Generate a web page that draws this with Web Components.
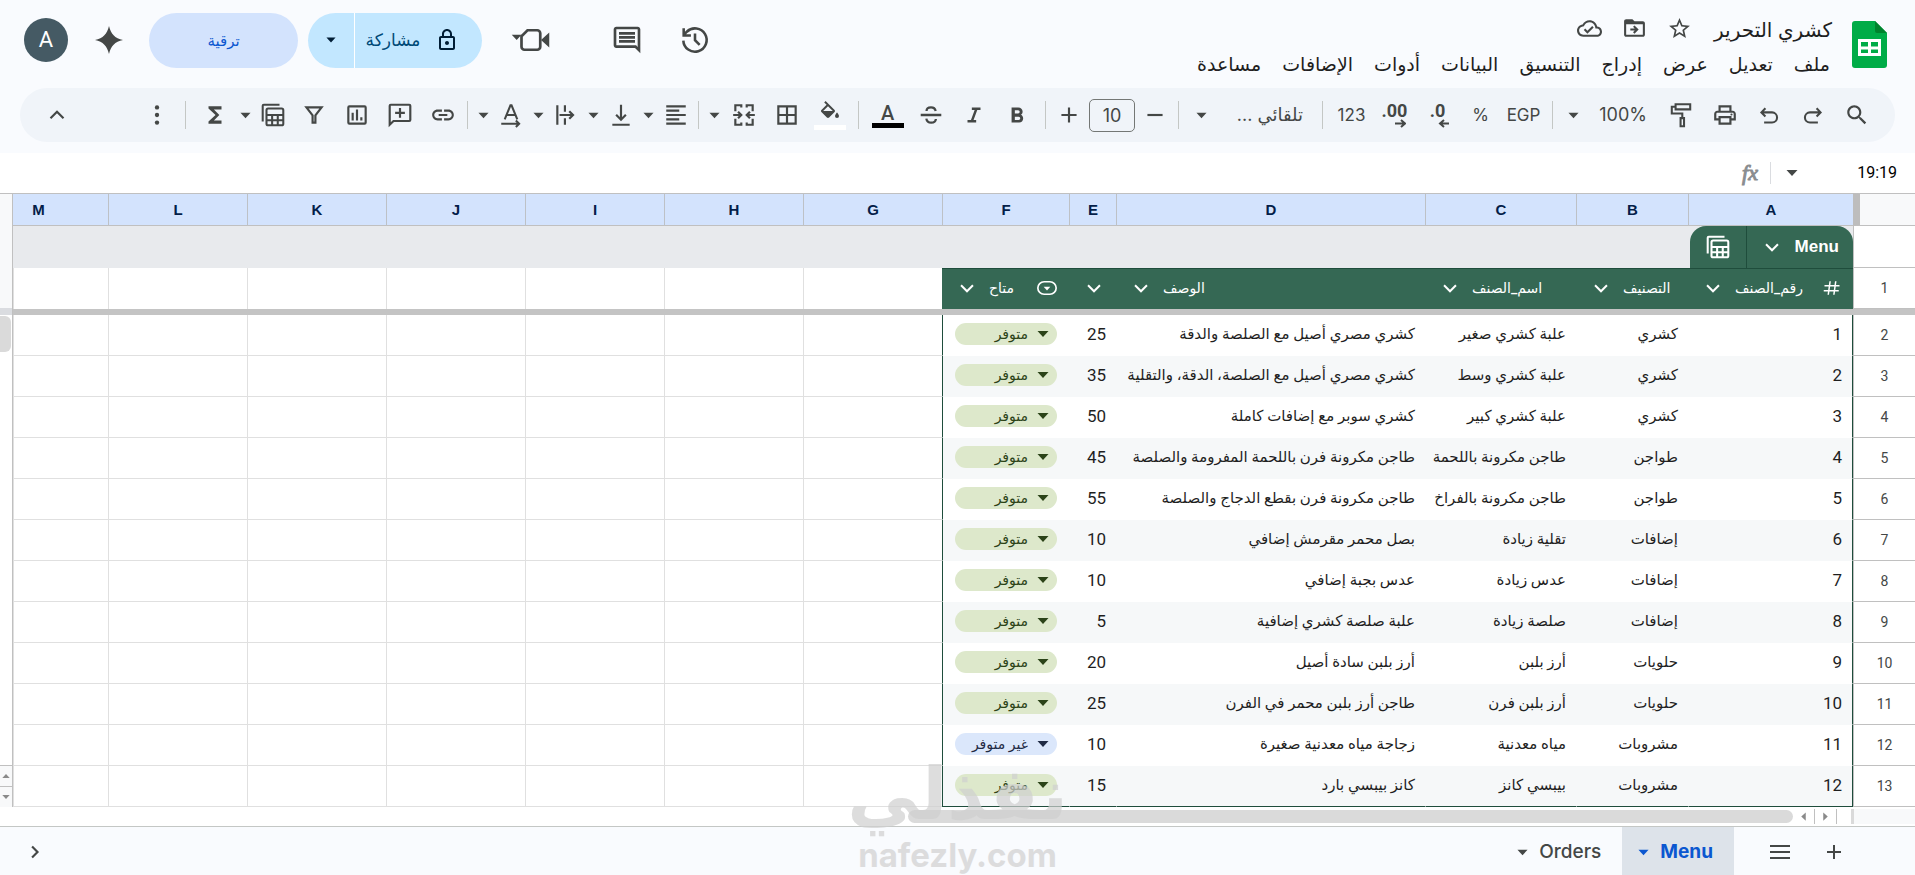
<!DOCTYPE html>
<html lang="ar" dir="rtl">
<head>
<meta charset="utf-8">
<title>كشري التحرير</title>
<style>
  :root {
    --ink: #1f1f1f;
    --icon: #444746;
    --line: #c4c7c5;
    --cell-line: #e0e0e0;
    --chrome: #f9fbfe;
    --green: #356854;
    --green-dark: #1f4d3c;
    --ui: Inter, Roboto, "DejaVu Sans", sans-serif;
    --cell: Roboto, "Liberation Sans", "DejaVu Sans", sans-serif;
  }
  body {
    margin: 0;
    min-height: 100vh;
    display: flex;
    flex-direction: column;
    background: #fff;
    color: var(--ink);
    font-family: var(--ui);
    overflow: hidden;
  }
</style>
</head>
<body>
<sheet-header></sheet-header>
<sheet-toolbar></sheet-toolbar>
<formula-bar></formula-bar>
<sheet-grid></sheet-grid>
<sheet-tabs></sheet-tabs>
<water-mark></water-mark>

<script>
// Icons on a 24x24 grid, drawn in currentColor
const ICONS = {
  star: '<path d="M22 9.24l-7.19-.62L12 2 9.19 8.63 2 9.24l5.46 4.73L5.82 21 12 17.27 18.18 21l-1.63-7.03L22 9.24zM12 15.4l-3.76 2.27 1-4.28-3.32-2.88 4.38-.38L12 6.1l1.71 4.04 4.38.38-3.32 2.88 1 4.28L12 15.4z"/>',
  move: '<path d="M20 5h-8l-2-2H4c-1.1 0-2 .9-2 2v13c0 1.100.9 2 2 2h16c1.100 0 2-.9 2-2V7c0-1.100-.9-2-2-2zm0 13H4V8h16v10zm-8-1l4-4-4-4-1.400 1.400 1.600 1.600H8v2h4.200l-1.600 1.600L12 17z"/>',
  cloud: '<path d="M19.35 10.04C18.67 6.59 15.64 4 12 4 9.11 4 6.61 5.64 5.36 8.04 2.34 8.36 0 10.91 0 14c0 3.31 2.69 6 6 6h13c2.76 0 5-2.24 5-5 0-2.64-2.05-4.78-4.65-4.96zM19 18H6c-2.21 0-4-1.79-4-4 0-2.05 1.53-3.76 3.56-3.97l1.07-.11.5-.95C8.08 7.14 9.94 6 12 6c2.62 0 4.88 1.86 5.39 4.43l.3 1.5 1.53.11c1.56.1 2.78 1.41 2.78 2.96 0 1.65-1.35 3-3 3zm-9-3.82l-2.09-2.09L6.5 13.5 10 17l6.01-6.01-1.41-1.41z"/>',
  history: '<g fill="none" stroke="currentColor" stroke-width="2.2"><path d="M2 12.500a10 10 0 1 0 3-7.600L2.600 7.400M2.300 2v6.200h6.200M12 6.500v5.700l4 4"/></g>',
  comment: '<path d="M21.99 4c0-1.1-.89-2-1.99-2H4c-1.1 0-2 .9-2 2v12c0 1.1.9 2 2 2h14l4 4-.01-18zM20 4v13.17L18.83 16H4V4h16zM6 12h12v2H6zm0-3h12v2H6zm0-3h12v2H6z"/>',
  lock: '<path d="M18 8h-1V6c0-2.76-2.24-5-5-5S7 3.24 7 6v2H6c-1.1 0-2 .9-2 2v10c0 1.1.9 2 2 2h12c1.1 0 2-.9 2-2V10c0-1.1-.9-2-2-2zM9 6c0-1.66 1.34-3 3-3s3 1.34 3 3v2H9V6zm9 14H6V10h12v10zm-6-3c1.1 0 2-.9 2-2s-.9-2-2-2-2 .9-2 2 .9 2 2 2z"/>',
  spark: '<path d="M12 0c1.600 7 5 10.400 12 12-7 1.600-10.400 5-12 12-1.600-7-5-10.400-12-12 7-1.600 10.400-5 12-12z"/>',
  meet: '<path fill="none" stroke="currentColor" stroke-width="1.800" d="M9 5.500h6.500a2 2 0 0 1 2 2v9a2 2 0 0 1-2 2H7a2 2 0 0 1-2-2V9.500z"/><path d="M18 12l5.500-5v10zM-1.500 8.500h6.500L1.800 12z"/>',
  search: '<path d="M15.5 14h-.79l-.28-.27C15.41 12.59 16 11.11 16 9.5 16 5.91 13.09 3 9.5 3S3 5.91 3 9.5 5.91 16 9.5 16c1.61 0 3.09-.59 4.23-1.57l.27.28v.79l5 4.99L20.49 19l-4.99-5zm-6 0C7.01 14 5 11.99 5 9.5S7.01 5 9.5 5 14 7.01 14 9.5 11.99 14 9.5 14z"/>',
  redo: '<path fill="none" stroke="currentColor" stroke-width="1.9" d="M15.300 5.800L19 9.600l-3.700 3.800M18.500 9.600H9.200a4.600 4.600 0 0 0 0 9.300H16.500"/>',
  undo: '<path fill="none" stroke="currentColor" stroke-width="1.9" d="M8.700 5.800L5 9.600l3.700 3.800M5.500 9.600h9.300a4.600 4.600 0 0 1 0 9.300H7.500"/>',
  print: '<path d="M19 8h-1V3H6v5H5c-1.66 0-3 1.34-3 3v6h4v4h12v-4h4v-6c0-1.660-1.340-3-3-3zM8 5h8v3H8V5zm8 14H8v-4h8v4zm2-4v-2H6v2H4v-4c0-.55.45-1 1-1h14c.55 0 1 .45 1 1v4h-2z"/><circle cx="18" cy="11.500" r="1"/>',
  paint: '<path fill="none" stroke="currentColor" stroke-width="1.900" d="M7 2h13.500v4.800H7zM7 4.400H3.500v6.300h9.700v4M11.600 14.900h3.200v7.500h-3.200z"/>',
  plus: '<path d="M19 13h-6v6h-2v-6H5v-2h6V5h2v6h6z"/>',
  minus: '<path d="M19 13H5v-2h14z"/>',
  bold: '<path d="M15.600 11.800c1-.7 1.600-1.800 1.600-2.800 0-2.300-1.700-4-4-4H7v14h7c2.100 0 3.700-1.700 3.700-3.800 0-1.500-.8-2.800-2.100-3.400zM10 7.500h3a1.500 1.500 0 0 1 0 3h-3v-3zm3.500 9H10v-3h3.500a1.500 1.500 0 0 1 0 3z"/>',
  italic: '<path d="M10 5v2.300h2.600L9.200 16.700H6V19h8v-2.300h-2.400L15 7.300h3V5z"/>',
  strike: '<path fill="none" stroke="currentColor" stroke-width="2.100" d="M2.500 12h19M16.300 8.200C15.800 6 14.300 4.900 12 4.900S7.900 6 7.900 8.200M7.700 15.300c.4 2.600 2 3.800 4.500 3.800 2.400 0 4.100-1.200 4.300-3.400"/>',
  borders: '<path d="M3 3v18h18V3H3zm8 16H5v-6h6v6zm0-8H5V5h6v6zm8 8h-6v-6h6v6zm0-8h-6V5h6v6z"/>',
  merge: '<path fill="none" stroke="currentColor" stroke-width="2" d="M9.500 3H4v5.500M4 15.500V21h5.500M14.500 3H20v5.500M20 15.500V21h-5.500M9.500 2v3M14.500 2v3M9.500 22v-3M14.500 22v-3M2 12h7.500M22 12h-7.500M6.500 9l3 3-3 3M17.500 9l-3 3 3 3"/>',
  fill: '<path d="M16.600 9L7.600 0 6.200 1.400l2.400 2.400-5.200 5.100c-.6.600-.6 1.500 0 2.100l5.500 5.500c.3.300.7.400 1.100.4s.8-.1 1.100-.4l5.500-5.500c.5-.5.5-1.400 0-2zM5.200 10L10 5.200 14.800 10H5.200zM19 11.500s-2 2.200-2 3.500a2 2 0 0 0 4 0c0-1.300-2-3.500-2-3.500z"/>',
  align: '<path d="M3 3h18v2H3zm0 4h12v2H3zm0 4h18v2H3zm0 4h12v2H3zm0 4h18v2H3z"/>',
  valign: '<path fill="none" stroke="currentColor" stroke-width="2" d="M12 2.500v13.500M7.500 11.800l4.500 4.500 4.500-4.500M4 21h16"/>',
  wrap: '<path fill="none" stroke="currentColor" stroke-width="2" d="M4 3v18M11 3v6M11 15v6M6 12h12.500M15 8.500l3.500 3.500-3.500 3.500"/>',
  rotate: '<path fill="none" stroke="currentColor" stroke-width="1.900" d="M6.200 16L11.500 3h1L17.800 16M8 12h8M3 20h16M16.500 17l3 3-3 3"/>',
  link: '<path d="M3.900 12c0-1.710 1.390-3.100 3.100-3.100h4V7H7c-2.760 0-5 2.240-5 5s2.240 5 5 5h4v-1.900H7c-1.710 0-3.100-1.390-3.100-3.100zM8 13h8v-2H8v2zm9-6h-4v1.900h4c1.710 0 3.100 1.390 3.100 3.100s-1.390 3.100-3.100 3.100h-4V17h4c2.760 0 5-2.240 5-5s-2.240-5-5-5z"/>',
  addComment: '<path fill="none" stroke="currentColor" stroke-width="2" d="M2.500 21V3.500a1 1 0 0 1 1-1h17a1 1 0 0 1 1 1v13a1 1 0 0 1-1 1H6zM12 5.500v9M7.500 10h9"/>',
  chart: '<path fill="none" stroke="currentColor" stroke-width="2" d="M5 4h14a1 1 0 0 1 1 1v14a1 1 0 0 1-1 1H5a1 1 0 0 1-1-1V5a1 1 0 0 1 1-1zM8 10v7M12 7v10M16 14v3"/>',
  filter: '<path fill="none" stroke="currentColor" stroke-width="2" d="M5 5h14l-5.700 7.300V19h-2.600v-6.700z"/>',
  tables: '<path fill="none" stroke="currentColor" stroke-width="1.900" d="M2.500 18V3.500a1 1 0 0 1 1-1H18M7.500 6H20a1.500 1.500 0 0 1 1.500 1.500v12.500a1.500 1.500 0 0 1-1.500 1.500H7.500A1.500 1.500 0 0 1 6 20V7.500A1.500 1.500 0 0 1 7.500 6zM6 12h15.500M6 16.800h15.500M11.200 12v9.500M16.400 12v9.500"/>',
  sigma: '<path d="M18 4H6v2l6.500 6L6 18v2h12v-3h-7l5-5-5-5h7z"/>',
  more: '<circle cx="12" cy="5" r="2"/><circle cx="12" cy="12" r="2"/><circle cx="12" cy="19" r="2"/>',
  up: '<path fill="none" stroke="currentColor" stroke-width="2" d="M6 15l6-6 6 6"/>',
  down: '<path fill="none" stroke="currentColor" stroke-width="2.200" d="M5.500 9l6.500 6.500L18.500 9"/>',
  right: '<path fill="none" stroke="currentColor" stroke-width="2.600" d="M8.500 5.500L15 12l-6.500 6.500"/>',
  menu: '<path d="M2 5h20v2H2zm0 6h20v2H2zm0 6h20v2H2z"/>',
  caret: '<path d="M1 6h22L12 18z"/>',
  caretUp: '<path d="M1 18h22L12 6z"/>',
  caretLeft: '<path d="M18 1v22L6 12z"/>',
  caretRight: '<path d="M6 1v22l12-11z"/>',
  hash: '<path fill="none" stroke="currentColor" stroke-width="2" d="M9.500 3L7 21M17 3l-2.500 18M2 9h20M1 15.500h20"/>',
  chip: '<rect x="1" y="4.500" width="22" height="15" rx="7.500" fill="none" stroke="currentColor" stroke-width="2"/><path d="M8 10.500h8L12 15z"/>',
};

// <sheet-icon name="star" size="24">
class SheetIcon extends HTMLElement {
  constructor() {
    super();
    this.attachShadow({ mode: "open" });
  }

  connectedCallback() {
    const size = this.getAttribute("size") ?? "26";
    this.shadowRoot.innerHTML = `
      <style>
        :host { display: inline-flex; flex: none; }
        svg { display: block; fill: currentColor; overflow: visible; }
      </style>
      <svg viewBox="0 0 24 24" width="${size}" height="${size}" aria-hidden="true">${ICONS[this.getAttribute("name")]}</svg>
    `;
  }
}
customElements.define("sheet-icon", SheetIcon);

// A real button around whatever is slotted in
class ToolButton extends HTMLElement {
  constructor() {
    super();
    this.attachShadow({ mode: "open" });
    this.shadowRoot.innerHTML = `
      <style>
        :host { display: flex; flex: none; width: 43px; height: 40px; }
        :host([kind="main"]) { width: 44px; }
        :host([kind="narrow"]) { width: 39px; }
        :host([kind="caret"]) { width: 24px; }
        :host([kind="paired"]) { width: 31px; }
        :host([kind="step"]) { width: 32px; }
        :host([kind="edge"]) { width: 16px; }
        button {
          all: unset;
          box-sizing: border-box;
          width: 100%;
          display: flex;
          flex-direction: column;
          align-items: center;
          justify-content: center;
          white-space: nowrap;
          cursor: pointer;
          border-radius: 4px;
        }
        button:focus-visible { outline: 2px solid #0b57d0; }
      </style>
      <button type="button"><slot></slot></button>
    `;
  }

  connectedCallback() {
    const label = this.getAttribute("label");
    if (label) this.shadowRoot.querySelector("button").setAttribute("aria-label", label);
  }
}
customElements.define("tool-button", ToolButton);

class SheetHeader extends HTMLElement {
  constructor() {
    super();
    const menus = ["ملف", "تعديل", "عرض", "إدراج", "التنسيق", "البيانات", "أدوات", "الإضافات", "مساعدة"];
    this.attachShadow({ mode: "open" });
    this.shadowRoot.innerHTML = `
      <style>
        :host { display: block; background: var(--chrome); }
        header { display: flex; height: 88px; box-sizing: border-box; padding: 0 28px 0 24px; gap: 11px; }
        button { all: unset; box-sizing: border-box; cursor: pointer; white-space: nowrap; }
        .logo { flex: none; margin-top: 21px; }
        .docs { flex: 1; display: flex; flex-direction: column; padding-top: 12px; }
        .title { display: flex; align-items: center; gap: 20px; height: 36px; padding-inline-start: 9px; color: var(--icon); }
        h1 { margin: 0 0 0 2px; font-size: 20px; line-height: 24px; font-weight: 400; color: var(--ink); white-space: nowrap; }
        nav { display: flex; gap: 21px; height: 34px; align-items: center; padding-inline-start: 11px; }
        nav button { font-size: 19px; line-height: 24px; }
        .actions { display: flex; align-items: center; gap: 10px; height: 80px; color: var(--icon); }
        .actions > button { display: flex; align-items: center; justify-content: center; }
        .history { width: 26px; }
        .comments { width: 90px; }
        .meet { width: 80px; }
        .spark { width: 61px; }
        .share { display: flex; height: 55px; border-radius: 28px; overflow: hidden; background: #c2e7ff; color: #001d35; }
        .share button { display: flex; align-items: center; justify-content: center; gap: 15px; }
        .share .main { width: 127px; padding-inline-start: 12px; color: #004a77; font-size: 17px; }
        .share .main sheet-icon { color: #001d35; }
        .share .drop { width: 47px; border-inline-start: 1px solid #fff; }
        .actions .upgrade { width: 149px; height: 55px; border-radius: 28px; background: #d3e3fd; color: #0b57d0; font-size: 15px; font-weight: 500; }
        .actions .avatar { width: 44px; height: 44px; border-radius: 50%; background: #455a64; color: #fff; font: 22px/44px Roboto, sans-serif; }
      </style>
      <header>
        <svg class="logo" width="35" height="47" viewBox="0 0 35 47" role="img" aria-label="Sheets">
          <path fill="#00ac47" d="M3 0h20l12 12v32a3 3 0 0 1-3 3H3a3 3 0 0 1-3-3V3a3 3 0 0 1 3-3z"/>
          <path fill="#00832d" d="M23 0l12 12H25a2 2 0 0 1-2-2z"/>
          <path fill="#fff" fill-rule="evenodd" d="M6 18h23v17H6zM9 21v4.500h7V21zm10 0v4.500h7V21zM9 28.500V32h7v-3.500zm10 0V32h7v-3.500z"/>
        </svg>
        <div class="docs">
          <div class="title">
            <h1>كشري التحرير</h1>
            <button aria-label="تمييز بنجمة"><sheet-icon name="star" size="25"></sheet-icon></button>
            <button aria-label="نقل"><sheet-icon name="move" size="25"></sheet-icon></button>
            <button aria-label="حالة المستند"><sheet-icon name="cloud" size="25"></sheet-icon></button>
          </div>
          <nav>${menus.map((m) => `<button>${m}</button>`).join("")}</nav>
        </div>
        <div class="actions">
          <button class="history" aria-label="السجل"><sheet-icon name="history" size="28"></sheet-icon></button>
          <button class="comments" aria-label="التعليقات"><sheet-icon name="comment" size="32"></sheet-icon></button>
          <button class="meet" aria-label="Meet"><sheet-icon name="meet" size="36"></sheet-icon></button>
          <div class="share">
            <button class="main"><sheet-icon name="lock" size="24"></sheet-icon><span>مشاركة</span></button>
            <button class="drop" aria-label="خيارات المشاركة"><sheet-icon name="caret" size="10"></sheet-icon></button>
          </div>
          <button class="upgrade">ترقية</button>
          <button class="spark" aria-label="Gemini"><sheet-icon name="spark" size="28"></sheet-icon></button>
          <button class="avatar">A</button>
        </div>
      </header>
    `;
  }
}
customElements.define("sheet-header", SheetHeader);

class SheetToolbar extends HTMLElement {
  constructor() {
    super();
    const tool = (name, label, kind = "") =>
      `<tool-button kind="${kind}" label="${label}"><sheet-icon name="${name}" size="${kind === "caret" || kind === "edge" ? 11 : 26}"></sheet-icon></tool-button>`;
    const drop = (name, label) => tool(name, label, "paired") + tool("caret", `خيارات ${label}`, "caret");
    const sep = '<span class="sep"></span>';
    this.attachShadow({ mode: "open" });
    this.shadowRoot.innerHTML = `
      <style>
        :host { display: block; background: var(--chrome); padding: 0 20px 11px; }
        .bar { display: flex; align-items: center; height: 54px; padding: 0 16px 0 15px; border-radius: 27px; background: #f0f4f9; color: var(--icon); }
        .sep { flex: none; width: 1px; height: 28px; margin: 0 7px; background: var(--line); }
        .sep.tight { margin: 0 3px; }
        label { flex: none; display: flex; align-items: center; }
        select, input { all: unset; box-sizing: border-box; color: inherit; font-family: var(--ui); line-height: 24px; }
        .zoom { padding: 0 12px 0 1px; }
        .zoom select { width: 62px; font-size: 18px; }
        .zoom sheet-icon { width: 24px; justify-content: center; }
        .font { gap: 18px; padding: 0 12px 0 10px; }
        .font select { width: 78px; font-size: 18px; }
        .size { display: flex; align-items: center; gap: 4px; }
        .size input { width: 46px; height: 33px; border: 1px solid #747775; border-radius: 5px; text-align: center; font-size: 18px; }
        .text { font-size: 17px; line-height: 20px; }
        .num { font: 700 18px/16px Roboto, sans-serif; }
        .swatch { width: 32px; height: 5px; }
        .letter { font: 500 20px/20px Roboto, sans-serif; }
        .collapse { margin-inline-start: auto; }
      </style>
      <div class="bar" role="toolbar" aria-label="شريط الأدوات">
        ${tool("search", "بحث", "main")}
        ${tool("redo", "إعادة", "main")}
        ${tool("undo", "تراجع", "main")}
        ${tool("print", "طباعة", "main")}
        ${tool("paint", "نسخ التنسيق", "main")}
        <label class="zoom"><select aria-label="تكبير أو تصغير"><option>100%</option></select><sheet-icon name="caret" size="11"></sheet-icon></label>
        ${sep}
        <tool-button><span class="text">EGP</span></tool-button>
        <tool-button><span class="text">%</span></tool-button>
        <tool-button><span class="num" dir="ltr">.0</span><svg width="22" height="9" viewBox="0 0 22 9" fill="none" stroke="currentColor" stroke-width="2"><path d="M22 4.500H13M17 1l-4 3.500L17 8"/></svg></tool-button>
        <tool-button><span class="num" dir="ltr">.00</span><svg width="22" height="9" viewBox="0 0 22 9" fill="none" stroke="currentColor" stroke-width="2"><path d="M11 4.500h10M17 1l4 3.500L17 8"/></svg></tool-button>
        <tool-button><span class="text">123</span></tool-button>
        ${sep}
        <label class="font"><select aria-label="الخط"><option>تلقائي ...</option></select><sheet-icon name="caret" size="11"></sheet-icon></label>
        ${sep}
        <div class="size">
          ${tool("minus", "تصغير حجم الخط", "step")}
          <input aria-label="حجم الخط" value="10">
          ${tool("plus", "تكبير حجم الخط", "step")}
        </div>
        ${sep}
        ${tool("bold", "غامق")}
        ${tool("italic", "مائل")}
        ${tool("strike", "يتوسطه خط")}
        <tool-button label="لون النص"><span class="letter">A</span><span class="swatch" style="background:#000"></span></tool-button>
        ${sep}
        <tool-button label="لون التعبئة"><sheet-icon name="fill" size="24"></sheet-icon><span class="swatch" style="background:#fff"></span></tool-button>
        ${tool("borders", "الحدود")}
        ${tool("merge", "دمج الخلايا")}
        ${tool("caret", "خيارات الدمج", "edge")}
        ${sep}
        ${drop("align", "محاذاة أفقية")}
        ${drop("valign", "محاذاة رأسية")}
        ${drop("wrap", "التفاف النص")}
        ${drop("rotate", "تدوير النص")}
        <span class="sep tight"></span>
        ${tool("link", "إدراج رابط")}
        ${tool("addComment", "إدراج تعليق")}
        ${tool("chart", "إدراج رسم بياني")}
        ${tool("filter", "فلتر")}
        ${tool("tables", "الجداول", "narrow")}
        ${tool("caret", "خيارات الجداول", "edge")}
        ${tool("sigma", "الدوال", "main")}
        ${sep}
        ${tool("more", "المزيد")}
        <tool-button class="collapse" label="إخفاء القوائم"><sheet-icon name="up" size="26"></sheet-icon></tool-button>
      </div>
    `;
  }
}
customElements.define("sheet-toolbar", SheetToolbar);

class FormulaBar extends HTMLElement {
  constructor() {
    super();
    this.attachShadow({ mode: "open" });
    this.shadowRoot.innerHTML = `
      <style>
        :host { display: flex; align-items: center; height: 40px; box-sizing: border-box; padding-inline-start: 18px; color: var(--icon); }
        input { all: unset; box-sizing: border-box; font-family: Roboto, sans-serif; font-size: 16px; line-height: 24px; color: #000; }
        .name { width: 99px; }
        button { all: unset; width: 12px; display: flex; cursor: pointer; }
        .sep { width: 1px; height: 22px; margin: 0 15px 0 12px; background: #dadce0; }
        .fx { font: italic 22px/24px "Liberation Serif", serif; color: #8a8d90; -webkit-text-stroke: 1px #8a8d90; }
        .formula { flex: 1; }
      </style>
      <input class="name" aria-label="مربع الاسم" value="19:19">
      <button aria-label="النطاقات"><sheet-icon name="caret" size="12"></sheet-icon></button>
      <span class="sep"></span>
      <span class="fx">fx</span>
      <input class="formula" aria-label="الصيغة">
    `;
  }
}
customElements.define("formula-bar", FormulaBar);

// Drop-down chip of the availability column
class StatusChip extends HTMLElement {
  constructor() {
    super();
    this.attachShadow({ mode: "open" });
  }

  connectedCallback() {
    const value = this.getAttribute("value");
    const other = value === "متوفر" ? "غير متوفر" : "متوفر";
    this.shadowRoot.innerHTML = `
      <style>
        :host { display: flex; align-items: center; gap: 9px; height: 22px; padding: 0 8px; border-radius: 11px; background: #dde8cb; color: #2b4318; }
        :host([value="غير متوفر"]) { background: #dbe7fb; color: #1f2a44; }
        select { all: unset; flex: 1; min-width: 0; font-size: 14px; line-height: 20px; white-space: nowrap; cursor: pointer; }
      </style>
      <sheet-icon name="caret" size="12"></sheet-icon>
      <select aria-label="متاح"><option>${value}</option><option>${other}</option></select>
    `;
  }
}
customElements.define("status-chip", StatusChip);

class SheetGrid extends HTMLElement {
  constructor() {
    super();
    this.rows = [
      ["كشري", "علبة كشري صغير", "كشري مصري أصيل مع الصلصة والدقة", 25, "متوفر"],
      ["كشري", "علبة كشري وسط", "كشري مصري أصيل مع الصلصة، الدقة، والتقلية", 35, "متوفر"],
      ["كشري", "علبة كشري كبير", "كشري سوبر مع إضافات كاملة", 50, "متوفر"],
      ["طواجن", "طاجن مكرونة باللحمة", "طاجن مكرونة فرن باللحمة المفرومة والصلصة", 45, "متوفر"],
      ["طواجن", "طاجن مكرونة بالفراخ", "طاجن مكرونة فرن بقطع الدجاج والصلصة", 55, "متوفر"],
      ["إضافات", "تقلية زيادة", "بصل محمر مقرمش إضافي", 10, "متوفر"],
      ["إضافات", "عدس زيادة", "عدس بجبة إضافي", 10, "متوفر"],
      ["إضافات", "صلصة زيادة", "علبة صلصة كشري إضافية", 5, "متوفر"],
      ["حلويات", "أرز بلبن", "أرز بلبن سادة أصيل", 20, "متوفر"],
      ["حلويات", "أرز بلبن فرن", "طاجن أرز بلبن محمر في الفرن", 25, "متوفر"],
      ["مشروبات", "مياه معدنية", "زجاجة مياه معدنية صغيرة", 10, "غير متوفر"],
      ["مشروبات", "بيبسي كانز", "كانز بيبسي بارد", 15, "متوفر"],
    ];
    this.attachShadow({ mode: "open" });
    this.render();
  }

  render() {
    // row numbers, then columns A to L; M takes what is left
    const widths = [62, 165, 112, 151, 309, 47, 127, 139, 139, 139, 139, 139, 139];
    const blanks = "<td></td>".repeat(7);
    const field = (name, icon = "") =>
      `<th class="field" scope="col"><div>${icon}<span>${name}</span><button aria-label="خيارات العمود"><sheet-icon name="down" size="22"></sheet-icon></button></div></th>`;

    this.shadowRoot.innerHTML = `
      <style>
        :host { display: block; }
        .body { display: flex; }
        .sheet { flex: 1; min-width: 0; }
        table { width: 100%; table-layout: fixed; border-collapse: separate; border-spacing: 0; font-family: var(--cell); }
        th, td { box-sizing: border-box; padding: 0; overflow: hidden; white-space: nowrap; }
        button { all: unset; display: flex; cursor: pointer; }

        .letters th { height: 33px; border-top: 1px solid #c0c0c0; border-bottom: 1px solid #c0c0c0; border-left: 1px solid #bdc1c6; background: #d3e3fd; color: #041e49; font: 700 15px/20px "Liberation Sans", sans-serif; }
        .letters .corner { border-left: 7px solid #bdbdbd; background: #f8f9fa; }
        .letters .last { border-left: 0; }
        .letters .last span { display: block; width: 139px; }

        .side { height: 41px; border-left: 1px solid #c0c0c0; border-bottom: 1px solid #c0c0c0; font-weight: 400; font-size: 14px; color: var(--icon); }
        .band td { height: 42px; background: #e8eaed; }
        .band .side { background: #fff; }
        .menu-tab { display: flex; width: 163px; height: 42px; border-radius: 16px 16px 0 0; background: var(--green); color: #fff; }
        .menu-tab .name { display: flex; align-items: center; justify-content: space-between; width: 78px; padding: 0 14px; border-left: 1px solid var(--green-dark); font: 700 17px/24px "Liberation Sans", sans-serif; }
        .menu-tab .table { width: 56px; align-items: center; justify-content: center; }

        .field { padding-bottom: 2px; background: var(--green); border-top: 1px solid var(--green-dark); color: #fff; font-weight: 500; font-size: 14px; }
        .field div { display: flex; align-items: center; justify-content: flex-end; gap: 11px; padding: 0 12px 0 14px; }
        .field > div > sheet-icon { margin-left: auto; }
        .fields td { border-left: 1px solid var(--cell-line); }
        .freeze td { height: 6px; background: #c4c4c4; }

        tbody td { border-left: 1px solid var(--cell-line); border-bottom: 1px solid var(--cell-line); }
        tbody .data { padding: 0 10px 2px; border-color: transparent; font-size: 15px; text-align: start; }
        tbody .number { font-size: 17px; }
        tbody .data.status { padding: 0 12px 2px; border-left: 1px solid var(--green-dark); }
        tbody .data:nth-child(2) { border-right: 1px solid var(--green-dark); }
        tbody tr:nth-child(even) .data { background: #f6f8f9; }
        tbody tr:last-child .data { border-bottom-color: var(--green-dark); }

        .rail { flex: none; width: 12px; display: flex; flex-direction: column; border-right: 1px solid #c0c0c0; border-top: 1px solid #c0c0c0; background: #fff; }
        .rail .head { height: 114px; background: #f8f9fa; }
        .rail .gap { height: 7px; background: #dadce0; }
        .rail .thumb { width: 11px; height: 36px; margin-top: 1px; margin-right: auto; border-radius: 0 6px 6px 0; background: #dadada; }
        .rail .space { flex: 1; }
        .rail button { height: 20px; align-items: center; justify-content: center; border-top: 1px solid #c0c0c0; background: #f8f9fa; color: #8a8a8a; }

        .scroll { display: flex; align-items: center; height: 20px; border-bottom: 1px solid var(--line); box-sizing: border-box; color: #8a8a8a; }
        .scroll .end { width: 61px; height: 15px; background: #f8f9fa; border-left: 3px solid #dadada; }
        .scroll .blank { width: 14px; }
        .scroll button { width: 21px; height: 15px; justify-content: center; align-items: center; border-right: 1px solid #c0c0c0; }
        .scroll .thumb { width: 885px; height: 13px; border-radius: 7px; background: #dadada; }
      </style>
      <div class="body">
        <div class="sheet">
          <table>
            <colgroup>${widths.map((w) => `<col style="width:${w}px">`).join("")}<col></colgroup>
            <thead>
              <tr class="letters">
                <th class="corner"></th>
                ${[..."ABCDEFGHIJKL"].map((c) => `<th scope="col">${c}</th>`).join("")}
                <th class="last" scope="col"><span>M</span></th>
              </tr>
              <tr class="band">
                <td class="side"></td>
                <td colspan="13">
                  <div class="menu-tab">
                    <button class="name"><span>Menu</span><sheet-icon name="down" size="22"></sheet-icon></button>
                    <button class="table" aria-label="خيارات الجدول"><sheet-icon name="tables" size="26"></sheet-icon></button>
                  </div>
                </td>
              </tr>
              <tr class="fields">
                <th class="side" scope="row">1</th>
                ${field("رقم_الصنف", '<sheet-icon name="hash" size="18"></sheet-icon>')}
                ${field("التصنيف")}
                ${field("اسم_الصنف")}
                ${field("الوصف")}
                ${field("")}
                ${field("متاح", '<sheet-icon name="chip" size="20"></sheet-icon>')}
                ${blanks}
              </tr>
              <tr class="freeze"><td colspan="14"></td></tr>
            </thead>
            <tbody>
              ${this.rows.map(([kind, name, text, price, state], i) => `
                <tr>
                  <th class="side" scope="row">${i + 2}</th>
                  <td class="data number">${i + 1}</td>
                  <td class="data">${kind}</td>
                  <td class="data">${name}</td>
                  <td class="data">${text}</td>
                  <td class="data number">${price}</td>
                  <td class="data status"><status-chip value="${state}"></status-chip></td>
                  ${blanks}
                </tr>`).join("")}
            </tbody>
          </table>
        </div>
        <div class="rail">
          <div class="head"></div>
          <div class="gap"></div>
          <div class="thumb"></div>
          <div class="space"></div>
          <button aria-label="أعلى"><sheet-icon name="caretUp" size="8"></sheet-icon></button>
          <button aria-label="أسفل"><sheet-icon name="caret" size="8"></sheet-icon></button>
        </div>
      </div>
      <div class="scroll">
        <div class="end"></div>
        <div class="blank"></div>
        <button aria-label="يمين"><sheet-icon name="caretRight" size="9"></sheet-icon></button>
        <button aria-label="يسار"><sheet-icon name="caretLeft" size="9"></sheet-icon></button>
        <div class="thumb"></div>
      </div>
    `;
  }
}
customElements.define("sheet-grid", SheetGrid);

class SheetTabs extends HTMLElement {
  constructor() {
    super();
    this.attachShadow({ mode: "open" });
    this.shadowRoot.innerHTML = `
      <style>
        :host { display: flex; flex: 1; align-items: stretch; min-height: 48px; padding: 0 58px 0 23px; background: var(--chrome); color: var(--icon); }
        button { all: unset; box-sizing: border-box; display: flex; align-items: center; justify-content: center; padding-top: 2px; cursor: pointer; }
        .icon { width: 46px; }
        .list { margin-left: 15px; width: 62px; }
        .tab { gap: 11px; padding: 2px 21px 0 16px; font-size: 19px; font-weight: 500; line-height: 24px; }
        .tab[aria-selected="true"] { background: #dde3ea; color: #0b57d0; font-weight: 700; }
        .next { margin-inline-start: auto; width: 24px; }
      </style>
      <button class="icon" aria-label="إضافة ورقة"><sheet-icon name="plus" size="24"></sheet-icon></button>
      <button class="list" aria-label="كل الأوراق"><sheet-icon name="menu" size="24"></sheet-icon></button>
      <button class="tab" role="tab" aria-selected="true"><span>Menu</span><sheet-icon name="caret" size="11"></sheet-icon></button>
      <button class="tab" role="tab" aria-selected="false"><span>Orders</span><sheet-icon name="caret" size="11"></sheet-icon></button>
      <button class="next" aria-label="التالي"><sheet-icon name="right" size="20"></sheet-icon></button>
    `;
  }
}
customElements.define("sheet-tabs", SheetTabs);

// Site mark floating over the bottom of the grid
class WaterMark extends HTMLElement {
  constructor() {
    super();
    this.attachShadow({ mode: "open" });
    this.shadowRoot.innerHTML = `
      <style>
        :host { position: absolute; left: 50%; bottom: 0; transform: translateX(-50%); display: flex; flex-direction: column; align-items: center; color: #d0d0d0; opacity: .7; font-weight: 700; pointer-events: none; }
        .ar { font-size: 72px; line-height: 84px; }
        .en { font: 700 33px/40px Inter, sans-serif; }
      </style>
      <span class="ar">نفذلي</span>
      <span class="en" dir="ltr">nafezly.com</span>
    `;
  }
}
customElements.define("water-mark", WaterMark);
</script>
</body>
</html>
